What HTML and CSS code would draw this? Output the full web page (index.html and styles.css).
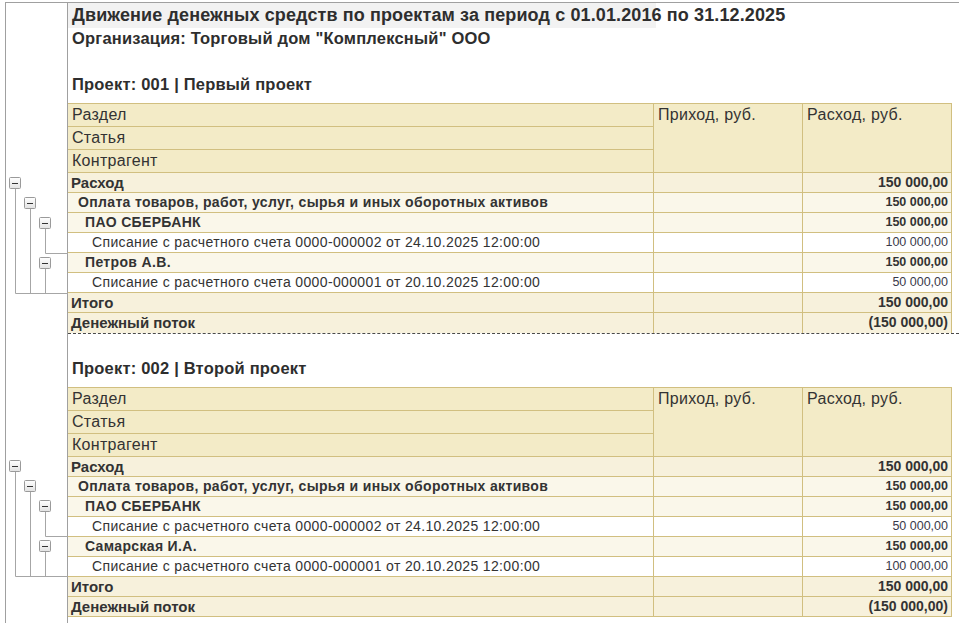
FILE: index.html
```html
<!DOCTYPE html>
<html lang="ru">
<head>
<meta charset="utf-8">
<title>Движение денежных средств по проектам</title>
<link rel="stylesheet" href="styles.css">
</head>
<body>
<div class="frame">
  <div class="gutter"></div>
  <div class="head">
    <div class="title">Движение денежных средств по проектам за период с 01.01.2016 по 31.12.2025</div>
    <div class="org">Организация: Торговый дом "Комплексный" ООО</div>
  </div>

  <div class="gutter tree-cell">
    <svg class="tree" width="62" height="161" viewBox="0 0 62 161">
      <defs>
        <linearGradient id="bx1" x1="0" y1="0" x2="0" y2="1">
          <stop offset="0" stop-color="#ffffff"/>
          <stop offset="1" stop-color="#e2e2e2"/>
        </linearGradient>
      </defs>
      <g stroke="#a6a6a6" stroke-width="1" fill="none">
        <path d="M9.5 16V120.5H62"/>
        <path d="M24.5 36V120.5"/>
        <path d="M39.5 56V80.5H62"/>
        <path d="M39.5 96V120.5"/>
      </g>
      <g stroke="#9a9a9a" fill="url(#bx1)">
        <rect x="3.5" y="4.5" width="11" height="11" rx="1"/>
        <rect x="18.5" y="24.5" width="11" height="11" rx="1"/>
        <rect x="33.5" y="44.5" width="11" height="11" rx="1"/>
        <rect x="33.5" y="84.5" width="11" height="11" rx="1"/>
      </g>
      <g stroke="#333" stroke-width="1">
        <path d="M6 10.5H12M21 30.5H27M36 50.5H42M36 90.5H42"/>
      </g>
    </svg>
  </div>
  <div class="project sep">
    <div class="ptitle">Проект: 001 | Первый проект</div>
    <div class="table">
      <div class="thead">
        <div class="th c1 r1">Раздел</div>
        <div class="th c1 r2">Статья</div>
        <div class="th c1 r3">Контрагент</div>
        <div class="th c2">Приход, руб.</div>
        <div class="th c3">Расход, руб.</div>
      </div>
      <div class="row lvl1"><div class="cell lbl b15">Расход</div><div class="cell"></div><div class="cell num b14">150 000,00</div></div>
      <div class="row lvl2"><div class="cell lbl b14 i1">Оплата товаров, работ, услуг, сырья и иных оборотных активов</div><div class="cell"></div><div class="cell num bsm">150 000,00</div></div>
      <div class="row lvl2"><div class="cell lbl b14 i2">ПАО СБЕРБАНК</div><div class="cell"></div><div class="cell num bsm">150 000,00</div></div>
      <div class="row lvl3"><div class="cell lbl n14 i3">Списание с расчетного счета 0000-000002 от 24.10.2025 12:00:00</div><div class="cell"></div><div class="cell num nsm">100 000,00</div></div>
      <div class="row lvl2"><div class="cell lbl b14 i2">Петров А.В.</div><div class="cell"></div><div class="cell num bsm">150 000,00</div></div>
      <div class="row lvl3"><div class="cell lbl n14 i3">Списание с расчетного счета 0000-000001 от 20.10.2025 12:00:00</div><div class="cell"></div><div class="cell num nsm">50 000,00</div></div>
      <div class="row lvl1"><div class="cell lbl b15">Итого</div><div class="cell"></div><div class="cell num b14">150 000,00</div></div>
      <div class="row lvl1 last"><div class="cell lbl b15">Денежный поток</div><div class="cell"></div><div class="cell num b14">(150 000,00)</div></div>
    </div>
  </div>

  <div class="gutter tree-cell">
    <svg class="tree" width="62" height="161" viewBox="0 0 62 161">
      <defs>
        <linearGradient id="bx2" x1="0" y1="0" x2="0" y2="1">
          <stop offset="0" stop-color="#ffffff"/>
          <stop offset="1" stop-color="#e2e2e2"/>
        </linearGradient>
      </defs>
      <g stroke="#a6a6a6" stroke-width="1" fill="none">
        <path d="M9.5 16V120.5H62"/>
        <path d="M24.5 36V120.5"/>
        <path d="M39.5 56V80.5H62"/>
        <path d="M39.5 96V120.5"/>
      </g>
      <g stroke="#9a9a9a" fill="url(#bx2)">
        <rect x="3.5" y="4.5" width="11" height="11" rx="1"/>
        <rect x="18.5" y="24.5" width="11" height="11" rx="1"/>
        <rect x="33.5" y="44.5" width="11" height="11" rx="1"/>
        <rect x="33.5" y="84.5" width="11" height="11" rx="1"/>
      </g>
      <g stroke="#333" stroke-width="1">
        <path d="M6 10.5H12M21 30.5H27M36 50.5H42M36 90.5H42"/>
      </g>
    </svg>
  </div>
  <div class="project second">
    <div class="ptitle">Проект: 002 | Второй проект</div>
    <div class="table">
      <div class="thead">
        <div class="th c1 r1">Раздел</div>
        <div class="th c1 r2">Статья</div>
        <div class="th c1 r3">Контрагент</div>
        <div class="th c2">Приход, руб.</div>
        <div class="th c3">Расход, руб.</div>
      </div>
      <div class="row lvl1"><div class="cell lbl b15">Расход</div><div class="cell"></div><div class="cell num b14">150 000,00</div></div>
      <div class="row lvl2"><div class="cell lbl b14 i1">Оплата товаров, работ, услуг, сырья и иных оборотных активов</div><div class="cell"></div><div class="cell num bsm">150 000,00</div></div>
      <div class="row lvl2"><div class="cell lbl b14 i2">ПАО СБЕРБАНК</div><div class="cell"></div><div class="cell num bsm">150 000,00</div></div>
      <div class="row lvl3"><div class="cell lbl n14 i3">Списание с расчетного счета 0000-000002 от 24.10.2025 12:00:00</div><div class="cell"></div><div class="cell num nsm">50 000,00</div></div>
      <div class="row lvl2"><div class="cell lbl b14 i2">Самарская И.А.</div><div class="cell"></div><div class="cell num bsm">150 000,00</div></div>
      <div class="row lvl3"><div class="cell lbl n14 i3">Списание с расчетного счета 0000-000001 от 20.10.2025 12:00:00</div><div class="cell"></div><div class="cell num nsm">100 000,00</div></div>
      <div class="row lvl1"><div class="cell lbl b15">Итого</div><div class="cell"></div><div class="cell num b14">150 000,00</div></div>
      <div class="row lvl1"><div class="cell lbl b15">Денежный поток</div><div class="cell"></div><div class="cell num b14">(150 000,00)</div></div>
    </div>
  </div>

  <div class="gutter"></div>
  <div class="filler"></div>
</div>
</body>
</html>
```

FILE: styles.css
```css
html, body {
  margin: 0;
  padding: 0;
  background: #ffffff;
}

body {
  font-family: "Liberation Sans", Arial, sans-serif;
  color: #333333;
  overflow: hidden;
}

.frame {
  margin-top: 2px;
  margin-left: 5px;
  border-top: 1px solid #a0a0a0;
  border-left: 1px solid #a0a0a0;
  min-height: calc(100vh - 3px);
  display: grid;
  grid-template-columns: 62px 1fr;
  grid-template-rows: auto auto auto 1fr;
}

.gutter {
  border-right: 1px solid #a0a0a0;
}

.tree-cell {
  display: flex;
  flex-direction: column;
  justify-content: flex-end;
}

.tree {
  display: block;
}

.head {
  display: flex;
  flex-direction: column;
}

.title {
  width: 584px;
  height: 25px;
  line-height: 25px;
  padding-left: 4px;
  background: #f2f2f2;
  font-weight: bold;
  font-size: 18px;
  letter-spacing: 0.12px;
  white-space: nowrap;
  color: #2e2e2e;
}

.org {
  height: 20px;
  line-height: 20px;
  padding-left: 4px;
  font-weight: bold;
  font-size: 16.5px;
  letter-spacing: 0.2px;
  white-space: nowrap;
  color: #2e2e2e;
}

.project {
  padding-top: 26px;
}

.project.second {
  padding-top: 24px;
}

.project.sep {
  border-bottom: 1px dashed #4a4a4a;
}

.ptitle {
  height: 20px;
  line-height: 20px;
  padding-left: 4px;
  margin-bottom: 9px;
  font-weight: bold;
  font-size: 16.5px;
  letter-spacing: 0.2px;
  white-space: nowrap;
  color: #2e2e2e;
}

.table {
  width: 884px;
  border-top: 1px solid #d1bf80;
}

.thead {
  display: grid;
  grid-template-columns: 586px 149px 149px;
  grid-template-rows: 23px 23px 23px;
  background: #f3ebc7;
}

.th {
  box-sizing: border-box;
  border-right: 1px solid #d1bf80;
  border-bottom: 1px solid #d1bf80;
  padding-left: 4px;
  font-size: 16px;
  letter-spacing: 0.3px;
  line-height: 22px;
  white-space: nowrap;
  color: #333333;
}

.c1 { grid-column: 1; }
.r1 { grid-row: 1; }
.r2 { grid-row: 2; }
.r3 { grid-row: 3; }
.c2 { grid-column: 2; grid-row: 1 / span 3; }
.c3 { grid-column: 3; grid-row: 1 / span 3; }

.row {
  display: grid;
  grid-template-columns: 586px 149px 149px;
  height: 20px;
}

.lvl1 { background: #f7f1dc; }
.lvl2 { background: #faf7ea; }
.lvl3 { background: #ffffff; }

.cell {
  box-sizing: border-box;
  border-right: 1px solid #d1bf80;
  border-bottom: 1px solid #d1bf80;
  line-height: 19px;
  white-space: nowrap;
  overflow: hidden;
}

.last .cell {
  border-bottom: none;
}

.lbl { padding-left: 3px; }
.i1 { padding-left: 10px; }
.i2 { padding-left: 17px; }
.i3 { padding-left: 24px; }

.num {
  text-align: right;
  padding-right: 3px;
}

.b15 { font-weight: bold; font-size: 15px; }
.b14 { font-weight: bold; font-size: 14px; letter-spacing: 0.34px; }
.n14 { font-weight: normal; font-size: 14px; letter-spacing: 0.36px; }
.num.b14 { letter-spacing: 0; }
.bsm { font-weight: bold; font-size: 12.5px; }
.nsm { font-weight: normal; font-size: 12.5px; color: #3a3a4a; }

.filler { }
```
